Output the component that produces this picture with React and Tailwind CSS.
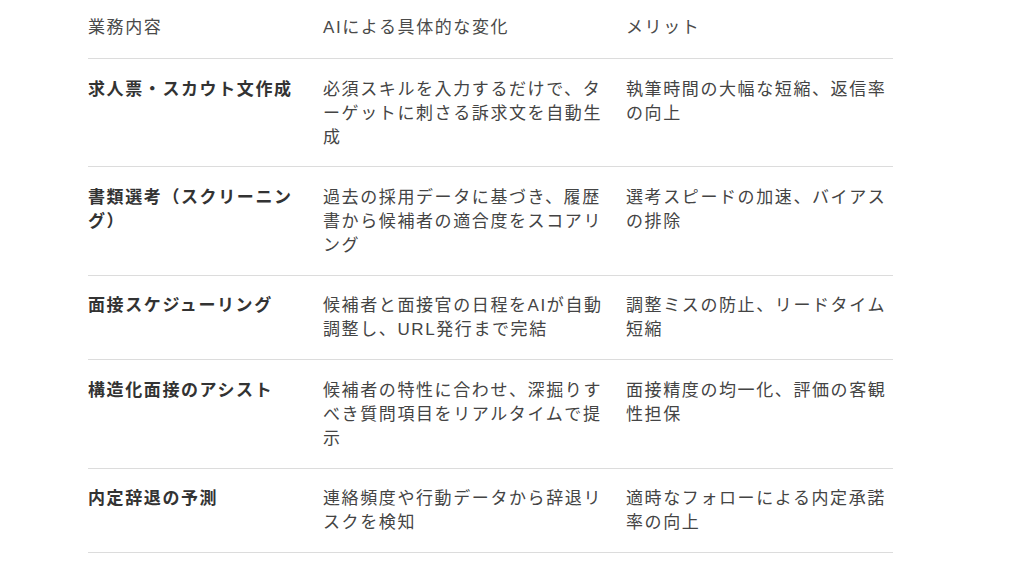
import React from 'react'

const rows = [
  {
    task: '求人票・スカウト文作成',
    change: '必須スキルを入力するだけで、ターゲットに刺さる訴求文を自動生成',
    merit: '執筆時間の大幅な短縮、返信率の向上',
  },
  {
    task: '書類選考（スクリーニング）',
    change: '過去の採用データに基づき、履歴書から候補者の適合度をスコアリング',
    merit: '選考スピードの加速、バイアスの排除',
  },
  {
    task: '面接スケジューリング',
    change: '候補者と面接官の日程をAIが自動調整し、URL発行まで完結',
    merit: '調整ミスの防止、リードタイム短縮',
  },
  {
    task: '構造化面接のアシスト',
    change: '候補者の特性に合わせ、深掘りすべき質問項目をリアルタイムで提示',
    merit: '面接精度の均一化、評価の客観性担保',
  },
  {
    task: '内定辞退の予測',
    change: '連絡頻度や行動データから辞退リスクを検知',
    merit: '適時なフォローによる内定承諾率の向上',
  },
]

const App = () => {
  return (
    <div className="min-h-screen bg-white font-['Liberation_Sans','Noto_Sans_CJK_JP',sans-serif]">
      <table className="ml-[88px] w-[805px] table-fixed border-collapse text-[17px] leading-[24px] tracking-[1.6px]">
        <colgroup>
          <col className="w-[235px]" />
          <col className="w-[303px]" />
          <col className="w-[267px]" />
        </colgroup>
        <thead>
          <tr className="border-b border-[#dcdcdc] text-left text-[#4a4a4a]">
            <th className="pt-[16px] pb-[18px] pr-5 font-normal">業務内容</th>
            <th className="pt-[16px] pb-[18px] pr-5 font-normal">AIによる具体的な変化</th>
            <th className="pt-[16px] pb-[18px] font-normal">メリット</th>
          </tr>
        </thead>
        <tbody>
          {rows.map((row) => (
            <tr key={row.task} className="border-b border-[#dcdcdc] align-top">
              <td className="pt-[18.5px] pb-[16.9px] pr-5 font-bold text-[#333333]">{row.task}</td>
              <td className="pt-[18.5px] pb-[16.9px] pr-5 text-[#444444]">{row.change}</td>
              <td className="pt-[18.5px] pb-[16.9px] text-[#444444]">{row.merit}</td>
            </tr>
          ))}
        </tbody>
      </table>
    </div>
  )
}

export default App
